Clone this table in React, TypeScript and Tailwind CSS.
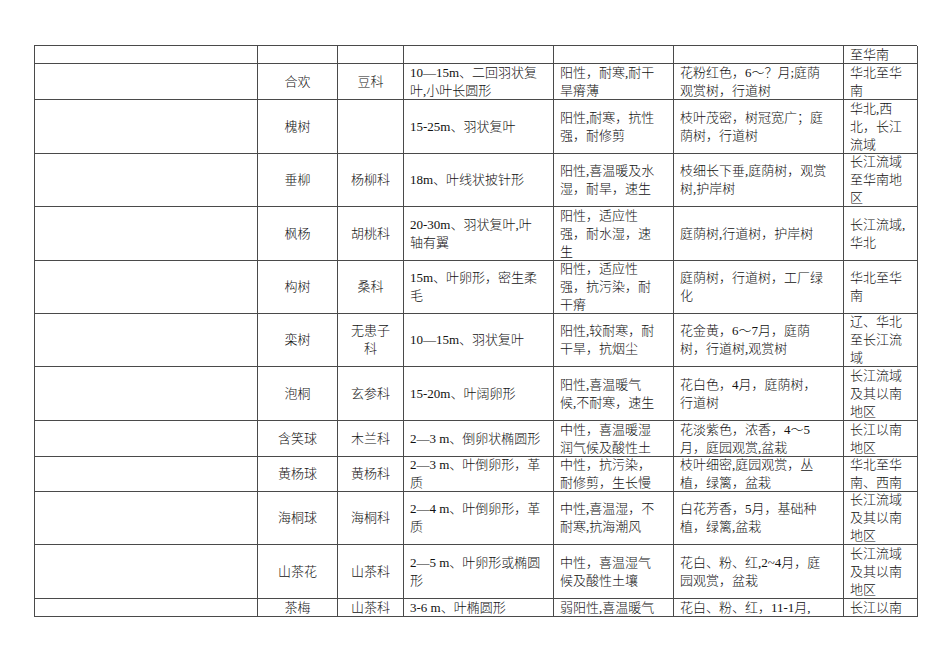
type Row = {
  name: string[];
  family: string[];
  shape: string[];
  habit: string[];
  use: string[];
  area: string[];
};

const ROWS: Row[] = [
  { name: [], family: [], shape: [], habit: [], use: [], area: ["至华南"] },
  {
    name: ["合欢"],
    family: ["豆科"],
    shape: ["10—15m、二回羽状复", "叶,小叶长圆形"],
    habit: ["阳性，耐寒,耐干", "旱瘠薄"],
    use: ["花粉红色，6～？月;庭荫", "观赏树，行道树"],
    area: ["华北至华", "南"],
  },
  {
    name: ["槐树"],
    family: [],
    shape: ["15-25m、羽状复叶"],
    habit: ["阳性,耐寒，抗性", "强，耐修剪"],
    use: ["枝叶茂密，树冠宽广；庭", "荫树，行道树"],
    area: ["华北,西", "北，长江", "流域"],
  },
  {
    name: ["垂柳"],
    family: ["杨柳科"],
    shape: ["18m、叶线状披针形"],
    habit: ["阳性,喜温暖及水", "湿，耐旱，速生"],
    use: ["枝细长下垂,庭荫树，观赏", "树,护岸树"],
    area: ["长江流域", "至华南地", "区"],
  },
  {
    name: ["枫杨"],
    family: ["胡桃科"],
    shape: ["20-30m、羽状复叶,叶", "轴有翼"],
    habit: ["阳性，适应性", "强，耐水湿，速", "生"],
    use: ["庭荫树,行道树，护岸树"],
    area: ["长江流域,", "华北"],
  },
  {
    name: ["构树"],
    family: ["桑科"],
    shape: ["15m、叶卵形，密生柔", "毛"],
    habit: ["阳性，适应性", "强，抗污染，耐", "干瘠"],
    use: ["庭荫树，行道树，工厂绿", "化"],
    area: ["华北至华", "南"],
  },
  {
    name: ["栾树"],
    family: ["无患子", "科"],
    shape: ["10—15m、羽状复叶"],
    habit: ["阳性,较耐寒，耐", "干旱，抗烟尘"],
    use: ["花金黄，6～7月，庭荫", "树，行道树,观赏树"],
    area: ["辽、华北", "至长江流", "域"],
  },
  {
    name: ["泡桐"],
    family: ["玄参科"],
    shape: ["15-20m、叶阔卵形"],
    habit: ["阳性,喜温暖气", "候,不耐寒，速生"],
    use: ["花白色，4月，庭荫树，", "行道树"],
    area: ["长江流域", "及其以南", "地区"],
  },
  {
    name: ["含笑球"],
    family: ["木兰科"],
    shape: ["2—3 m、倒卵状椭圆形"],
    habit: ["中性，喜温暖湿", "润气候及酸性土"],
    use: ["花淡紫色，浓香，4～5", "月，庭园观赏,盆栽"],
    area: ["长江以南", "地区"],
  },
  {
    name: ["黄杨球"],
    family: ["黄杨科"],
    shape: ["2—3 m、叶倒卵形，革", "质"],
    habit: ["中性，抗污染，", "耐修剪，生长慢"],
    use: ["枝叶细密,庭园观赏，丛", "植，绿篱，盆栽"],
    area: ["华北至华", "南、西南"],
  },
  {
    name: ["海桐球"],
    family: ["海桐科"],
    shape: ["2—4 m、叶倒卵形，革", "质"],
    habit: ["中性,喜温湿，不", "耐寒,抗海潮风"],
    use: ["白花芳香，5月，基础种", "植，绿篱,盆栽"],
    area: ["长江流域", "及其以南", "地区"],
  },
  {
    name: ["山茶花"],
    family: ["山茶科"],
    shape: ["2—5 m、叶卵形或椭圆", "形"],
    habit: ["中性，喜温湿气", "候及酸性土壤"],
    use: ["花白、粉、红,2~4月，庭", "园观赏，盆栽"],
    area: ["长江流域", "及其以南", "地区"],
  },
  {
    name: ["茶梅"],
    family: ["山茶科"],
    shape: ["3-6 m、叶椭圆形"],
    habit: ["弱阳性,喜温暖气"],
    use: ["花白、粉、红，11-1月,"],
    area: ["长江以南"],
  },
];

function Cell({ lines, center }: { lines: string[]; center?: boolean }) {
  return (
    <div
      className={`flex flex-col justify-center overflow-hidden border-r border-b border-[#4a4a4a] ${
        center ? "items-center text-center" : "items-start pl-[6px]"
      }`}
    >
      {lines.map((l, i) => (
        <div key={i} className="whitespace-nowrap leading-[18px]">
          {l}
        </div>
      ))}
    </div>
  );
}

export default function App() {
  return (
    <div
      className="min-h-[672px] w-[950px] bg-white pt-[45px] pl-[34px] text-[13px] font-light text-[#111]"
      style={{ fontFamily: '"Liberation Serif", "Noto Sans CJK SC", serif' }}
    >
      <div className="grid w-[883px] grid-cols-[223px_80px_66px_150px_120px_170px_74px] grid-rows-[18px_36px_54px_53px_54px_53px_53px_54px_36px_35px_53px_54px_18px] border-l border-t border-[#4a4a4a]">
        {ROWS.map((r, i) => (
          <div key={i} className="contents">
            <Cell lines={[]} />
            <Cell lines={r.name} center />
            <Cell lines={r.family} center />
            <Cell lines={r.shape} />
            <Cell lines={r.habit} />
            <Cell lines={r.use} />
            <Cell lines={r.area} />
          </div>
        ))}
      </div>
    </div>
  );
}
